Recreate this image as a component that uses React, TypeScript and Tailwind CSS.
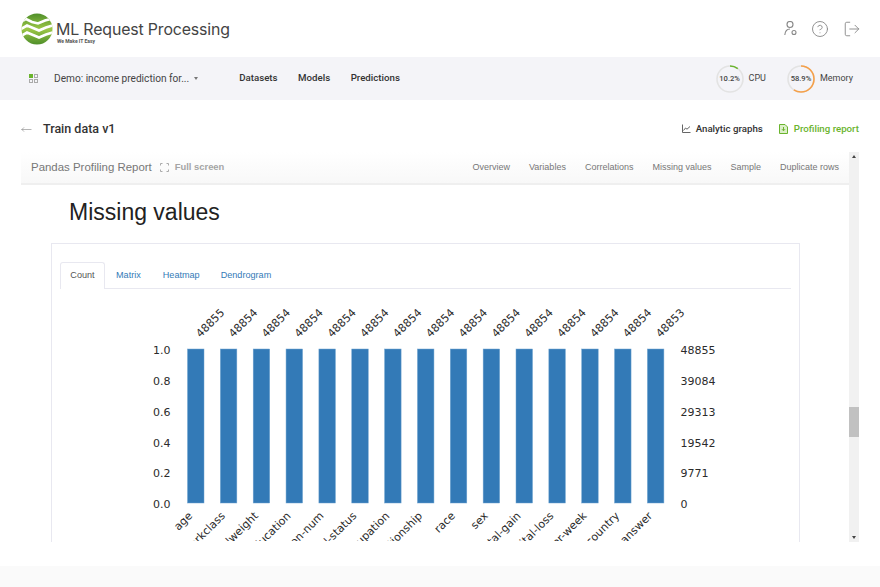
import { CircleHelp, LogOut, MoveLeft } from "lucide-react";

const COLUMNS = [
  ["age", 48855],
  ["workclass", 48854],
  ["fnlweight", 48854],
  ["education", 48854],
  ["education-num", 48854],
  ["marital-status", 48854],
  ["occupation", 48854],
  ["relationship", 48854],
  ["race", 48854],
  ["sex", 48854],
  ["capital-gain", 48854],
  ["capital-loss", 48854],
  ["hours-per-week", 48854],
  ["native-country", 48854],
  ["answer", 48853],
] as const;

const LEFT_TICKS = ["1.0", "0.8", "0.6", "0.4", "0.2", "0.0"];
const RIGHT_TICKS = ["48855", "39084", "29313", "19542", "9771", "0"];
const REPORT_LINKS = ["Overview", "Variables", "Correlations", "Missing values", "Sample", "Duplicate rows"];

function Logo() {
  return (
    <svg width="32" height="32" viewBox="0 0 32 32">
      <defs>
        <linearGradient id="logo-fill" x1="0" y1="0" x2="0" y2="1">
          <stop offset="0" stopColor="#4f8f2a" />
          <stop offset="0.5" stopColor="#9cc746" />
          <stop offset="1" stopColor="#4f8f2a" />
        </linearGradient>
        <clipPath id="logo-clip">
          <circle cx="16" cy="16" r="15.5" />
        </clipPath>
      </defs>
      <circle cx="16" cy="16" r="15.5" fill="url(#logo-fill)" />
      <g clipPath="url(#logo-clip)" fill="none" stroke="#fff" strokeWidth="2.6">
        <path d="M-1 9.5 L5 6 L11 9 L17 10.5 L24 7.5 L33 5" />
        <path d="M-1 16.5 L6 12.5 L12 15 L18 17.5 L25 14.5 L33 12" />
        <path d="M-1 23.5 L6 19.5 L12 22 L18 24.5 L25 21.5 L33 19" />
      </g>
    </svg>
  );
}

function UsageRing({ value, color, label }: { value: number; color: string; label: string }) {
  const radius = 13;
  const length = 2 * Math.PI * radius;
  return (
    <div className="flex items-center gap-[5px]">
      <div className="relative w-[28px] h-[28px]">
        <svg width="28" height="28" viewBox="0 0 28 28" className="-rotate-90">
          <circle cx="14" cy="14" r={radius} fill="none" stroke="#e3e3e3" strokeWidth="1.6" />
          <circle
            cx="14"
            cy="14"
            r={radius}
            fill="none"
            stroke={color}
            strokeWidth="1.6"
            strokeDasharray={`${(length * value) / 100} ${length}`}
          />
        </svg>
        <span className="absolute inset-0 flex items-center justify-center text-[7.6px] font-medium text-[#444]">
          {value}%
        </span>
      </div>
      <span className="text-[9px] text-[#444]">{label}</span>
    </div>
  );
}

function MissingChart() {
  return (
    <svg
      width="731"
      height="252"
      viewBox="60 290 731 252"
      fontFamily="'DejaVu Sans', sans-serif"
      fontSize="11"
      fill="#2b2b2b"
    >
      {COLUMNS.map(([name, count], i) => {
        const x = 187.5 + i * 32.85;
        return (
          <g key={name}>
            <rect x={x} y="350" width="16.5" height="154" fill="#337ab7" stroke="#6fa3d0" strokeWidth="0.5" />
            <text x={x + 13} y="339" transform={`rotate(-45 ${x + 13} 339)`}>
              {count}
            </text>
            <text x={x + 5.5} y="517.5" textAnchor="end" transform={`rotate(-45 ${x + 5.5} 517.5)`}>
              {name}
            </text>
          </g>
        );
      })}
      {LEFT_TICKS.map((tick, i) => (
        <text key={tick} x="153" y={355.4 + i * 30.7}>
          {tick}
        </text>
      ))}
      {RIGHT_TICKS.map((tick, i) => (
        <text key={tick} x="680.5" y={355.4 + i * 30.7}>
          {tick}
        </text>
      ))}
    </svg>
  );
}

export default function App() {
  return (
    <div className="w-[880px] h-[587px] flex flex-col bg-white overflow-hidden font-['Roboto',sans-serif]">
      <header className="h-[57px] shrink-0 flex items-center justify-between pl-[21px] pr-[19px]">
        <div className="flex items-center gap-[3px]">
          <Logo />
          <div className="flex flex-col mt-[7px]">
            <span className="font-['Inter',sans-serif] text-[15.9px] leading-[17px] tracking-[-0.15px] text-[#444]">
              ML Request Processing
            </span>
            <span className="text-[5px] leading-[6px] font-bold text-[#555] ml-[1px]">We Make IT Easy</span>
          </div>
        </div>
        <div className="flex items-center gap-[14px] text-[#888]">
          <svg width="13" height="15" viewBox="0 0 13 15" fill="none" stroke="currentColor" strokeWidth="1.1">
            <circle cx="6" cy="3.5" r="3" />
            <path d="M0.8 14 C1.2 10 3.5 8 6 8" />
            <circle cx="10" cy="11.5" r="2" />
          </svg>
          <CircleHelp size={18} strokeWidth={1.2} />
          <LogOut size={18} strokeWidth={1.2} />
        </div>
      </header>

      <nav className="h-[43px] shrink-0 bg-[#f4f4f8] flex items-center pl-[29px] pr-[27px]">
        <div className="grid grid-cols-2 gap-[1px] w-[9px] h-[9px]">
          <span className="bg-[#6ab42d]" />
          <span className="border border-[#aaa]" />
          <span className="border border-[#aaa]" />
          <span className="border border-[#aaa]" />
        </div>
        <span className="ml-[16px] text-[10.15px] text-[#444]">Demo: income prediction for...</span>
        <span className="ml-[5px] w-0 h-0 border-x-[2.5px] border-x-transparent border-t-[3px] border-t-[#777]" />
        <div className="ml-[41px] flex gap-[20.5px] text-[9.7px] font-medium text-[#333]">
          <span>Datasets</span>
          <span>Models</span>
          <span>Predictions</span>
        </div>
        <div className="ml-auto flex items-center gap-[21px]">
          <UsageRing value={10.2} color="#6ab42d" label="CPU" />
          <UsageRing value={58.9} color="#f5a04a" label="Memory" />
        </div>
      </nav>

      <div className="h-[52px] shrink-0 flex items-center pt-[6px] pl-[21px] pr-[21px]">
        <MoveLeft size={11} strokeWidth={1.2} className="text-[#777]" />
        <h1 className="ml-[11px] text-[12.5px] font-medium text-[#333]">Train data v1</h1>
        <div className="ml-auto flex items-center text-[9.7px] font-medium">
          <svg width="9" height="9" viewBox="0 0 9 9" fill="none" stroke="#555" strokeWidth="0.9">
            <path d="M0.5 0.5 V8.5 H8.5" />
            <path d="M1.5 6.5 L3.5 4 L5 5.2 L8 2.5" />
          </svg>
          <span className="ml-[5px] text-[#333]">Analytic graphs</span>
          <svg className="ml-[16px]" width="9" height="10" viewBox="0 0 9 10" fill="none" stroke="#6ab42d" strokeWidth="1">
            <path d="M0.5 0.5 H6 L8.5 3 V9.5 H0.5 Z" fill="#dcefc9" />
            <path d="M4.5 3 V6.5 M3 5.2 L4.5 6.8 L6 5.2" />
          </svg>
          <span className="ml-[6px] text-[#6ab42d]">Profiling report</span>
        </div>
      </div>

      <div className="h-[390px] shrink-0 mx-[21px] flex font-['Liberation_Sans',sans-serif]">
        <div className="w-[828px] overflow-hidden flex flex-col">
          <div className="h-[33px] shrink-0 flex items-center px-[10px] bg-gradient-to-b from-white to-[#f8f8f8] border-b-2 border-[#efefef]">
            <span className="text-[11.45px] text-[#777]">Pandas Profiling Report</span>
            <svg className="ml-[8px]" width="9" height="9" viewBox="0 0 9 9" fill="none" stroke="#aaa" strokeWidth="1">
              <path d="M0.5 2.5 V0.5 H2.5 M6.5 0.5 H8.5 V2.5 M8.5 6.5 V8.5 H6.5 M2.5 8.5 H0.5 V6.5" />
            </svg>
            <span className="ml-[6px] text-[9.4px] font-bold text-[#a5a5a5]">Full screen</span>
            <div className="ml-auto flex gap-[19px] text-[9px] text-[#777]">
              {REPORT_LINKS.map((link) => (
                <span key={link}>{link}</span>
              ))}
            </div>
          </div>
          <h2 className="ml-[48px] mt-[13px] h-[28px] text-[23px] leading-[28px] text-[#222]">Missing values</h2>
          <div className="ml-[30px] mt-[17px] w-[749px] flex-1 min-h-0 border-x border-t border-[#e8e8f0] pt-[18px] px-[8px] overflow-hidden">
            <div className="flex h-[27px] w-[731px] border-b border-[#e8e8f0] text-[9.1px] text-[#337ab7]">
              <span className="h-[27px] w-[45px] flex items-center justify-center bg-white border-x border-t border-[#e8e8f0] rounded-t-[3px] text-[#555]">
                Count
              </span>
              <span className="ml-[11px] leading-[27px]">Matrix</span>
              <span className="ml-[22px] leading-[27px]">Heatmap</span>
              <span className="ml-[21px] leading-[27px]">Dendrogram</span>
            </div>
            <MissingChart />
          </div>
        </div>
        <div className="w-[10px] bg-[#f1f1f1] flex flex-col items-center py-[3px]">
          <span className="w-0 h-0 border-x-[2.5px] border-x-transparent border-b-[3px] border-b-[#444]" />
          <div className="w-full h-[30px] bg-[#c1c1c1] mt-[249px]" />
          <span className="w-0 h-0 border-x-[2.5px] border-x-transparent border-t-[3px] border-t-[#444] mt-auto" />
        </div>
      </div>

      <div className="h-[24px] shrink-0" />
      <div className="flex-1 bg-[#fafafa]" />
    </div>
  );
}
